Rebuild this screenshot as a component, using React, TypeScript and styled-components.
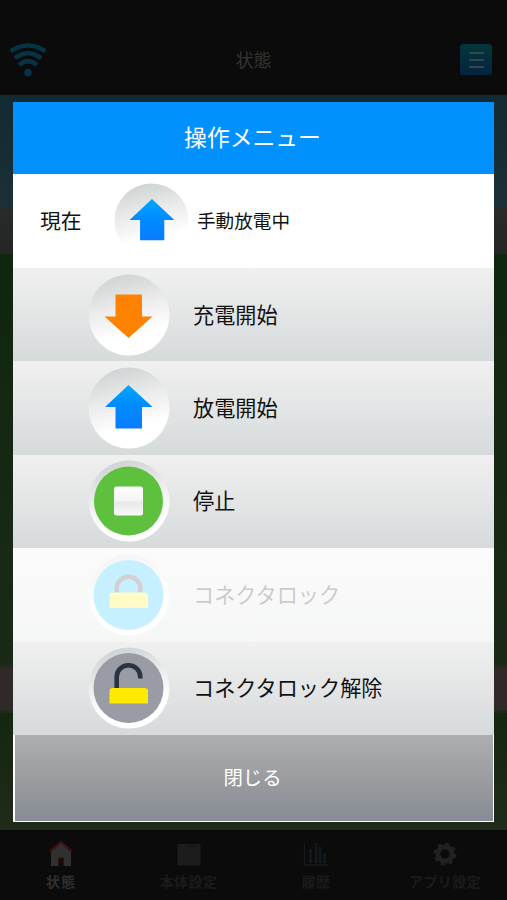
import React from 'react';
import styled, { createGlobalStyle } from 'styled-components';

const GlobalStyle = createGlobalStyle`
  * { box-sizing: border-box; }
  body {
    margin: 0;
    background: #0b0b0b;
    font-family: "Noto Sans CJK JP", "Noto Sans", sans-serif;
  }
`;

const Screen = styled.div`
  position: relative;
  display: flex;
  flex-direction: column;
  width: 507px;
  height: 900px;
  overflow: hidden;
  background: #0b0b0b;
`;

const TopBar = styled.header`
  display: flex;
  flex: none;
  align-items: center;
  justify-content: space-between;
  height: 95px;
  padding: 24px 15px 0 9px;
`;

const ScreenTitle = styled.h1`
  margin: 0 0 2px;
  color: #333;
  font-size: 18px;
  font-weight: 400;
  line-height: 24px;
`;

const MenuButton = styled.button`
  display: flex;
  flex-direction: column;
  align-items: center;
  justify-content: center;
  gap: 5px;
  width: 32px;
  height: 31px;
  padding: 0;
  border: 0;
  border-radius: 3px;
  background: linear-gradient(#03373c, #04233f);
`;

const MenuLine = styled.span`
  width: 15px;
  height: 2px;
  background: #38444a;
`;

const Scene = styled.div`
  display: flex;
  flex: 1;
  flex-direction: column;
`;

const Sky = styled.div`
  flex: none;
  height: 112px;
  background: linear-gradient(#122a32, #1b3038);
`;

const Cloud = styled.div`
  flex: none;
  height: 47px;
  background: linear-gradient(#292b2b, #242625);
`;

const Grass = styled.div`
  flex: 1;
  background: linear-gradient(#10260e, #1b2a18);
`;

const Path = styled.div`
  flex: none;
  height: 48px;
  border-top: 3px solid #242a20;
  border-bottom: 3px solid #202b1c;
  background: #302927;
`;

const Lawn = styled.div`
  flex: none;
  height: 117px;
  background: linear-gradient(#142610, #202b1a);
`;

const TabBar = styled.nav`
  display: grid;
  flex: none;
  grid-template-columns: 122px 133px 122px 136px;
  height: 70px;
`;

const Tab = styled.div<{ $active?: boolean }>`
  display: flex;
  flex-direction: column;
  align-items: center;
  padding-top: 11px;
  color: ${({ $active }) => ($active ? '#303030' : '#1b1b1b')};
  font-size: 14px;
  font-weight: 700;
  line-height: 20px;
  letter-spacing: ${({ $active }) => ($active ? '1px' : '0.4px')};
  white-space: nowrap;

  svg { display: block; margin-bottom: 4px; }
`;

const Dialog = styled.section`
  position: absolute;
  top: 102px;
  left: 13px;
  display: flex;
  flex-direction: column;
  width: 481px;
  height: 720px;
  background: #fff;
`;

const DialogTitle = styled.h2`
  flex: none;
  height: 72px;
  margin: 0;
  padding-right: 2px;
  background: #0091ff;
  color: #fff;
  font-size: 22.8px;
  font-weight: 400;
  line-height: 70px;
  text-align: center;
`;

const CurrentRow = styled.div`
  display: flex;
  flex: none;
  align-items: flex-start;
  height: 94px;
  padding: 9px 0 0 27px;
  color: #111;
`;

const CurrentLabel = styled.span`
  width: 74px;
  font-size: 20.8px;
  line-height: 75px;
`;

const CurrentValue = styled.span`
  margin-left: 8px;
  font-size: 18.6px;
  line-height: 74px;
`;

const ActionList = styled.div`
  display: grid;
  flex: none;
  grid-template-rows: repeat(5, 93.4px);
`;

const Action = styled.button<{ $disabled?: boolean }>`
  display: flex;
  align-items: center;
  gap: 23px;
  padding: 0 0 0 75px;
  border: 0;
  background: linear-gradient(#f0f0f0, #d6dadb);
  color: #111;
  font-family: inherit;
  font-size: 21.15px;
  line-height: 30px;
  text-align: left;
  opacity: ${({ $disabled }) => ($disabled ? 0.22 : 1)};

  svg { flex: none; }
`;

const ActionLabel = styled.span`
  padding-bottom: 2px;
`;

const CloseButton = styled.button`
  flex: 1;
  margin: 0 1.5px 1.5px;
  padding: 0 2px 2px 0;
  border: 0;
  background: linear-gradient(#adafaf, #989a9e 55%, #878b95);
  color: #fff;
  font-family: inherit;
  font-size: 19.4px;
  line-height: 82px;
`;

const WifiIcon = () => (
  <svg width="38" height="34" viewBox="0 0 38 34" fill="none" stroke="#063444" strokeWidth="4.4">
    <path d="M1.6 8.2Q19-3.2 36.4 8.2" />
    <path d="M5.8 15.2Q19 5.2 32.2 15.2" />
    <path d="M10 22.2Q19 14 28 22.2" />
    <circle cx="19" cy="29.5" r="3.8" fill="#063444" stroke="none" />
  </svg>
);

const Dial = ({ id }: { id: string }) => (
  <>
    <defs>
      <linearGradient id={`${id}-dial`} x1="0.35" y1="0" x2="0.6" y2="1">
        <stop offset="0" stopColor="#cfd3d3" />
        <stop offset="0.42" stopColor="#ededed" />
        <stop offset="0.75" stopColor="#fff" />
      </linearGradient>
      <linearGradient id={`${id}-blue`} x1="0" y1="0" x2="0" y2="1">
        <stop offset="0" stopColor="#00a8ff" />
        <stop offset="0.45" stopColor="#008cff" />
        <stop offset="1" stopColor="#087cff" />
      </linearGradient>
    </defs>
    <circle cx="41" cy="41" r="40.5" fill={`url(#${id}-dial)`} />
  </>
);

const CurrentIcon = () => (
  <svg width="75" height="64" viewBox="0 0 82 70">
    <Dial id="now" />
    <path d="M41.5 17.5L66 40.5H55V62.5H28.5V40.5H17Z" fill="url(#now-blue)" />
  </svg>
);

const ChargeIcon = () => (
  <svg width="82" height="82" viewBox="0 0 82 82">
    <Dial id="charge" />
    <path d="M27.5 20.5H54V42.5H64.5L40.5 64L16.5 42.5H27.5Z" fill="#ff8200" />
  </svg>
);

const DischargeIcon = () => (
  <svg width="82" height="82" viewBox="0 0 82 82">
    <Dial id="discharge" />
    <path d="M40.5 18L64.5 40H54V61.5H27.5V40H17Z" fill="url(#discharge-blue)" />
  </svg>
);

const StopIcon = () => (
  <svg width="82" height="82" viewBox="0 0 82 82">
    <Dial id="stop" />
    <defs>
      <linearGradient id="stop-square" x1="0" y1="0" x2="0" y2="1">
        <stop offset="0" stopColor="#fff" />
        <stop offset="0.5" stopColor="#f3f4f4" />
        <stop offset="0.55" stopColor="#e8e8ea" />
        <stop offset="1" stopColor="#fafafa" />
      </linearGradient>
    </defs>
    <circle cx="40.5" cy="41" r="34.5" fill="#5dc13d" />
    <rect x="26" y="26.5" width="29" height="29" rx="2.5" fill="url(#stop-square)" />
  </svg>
);

const LockIcon = () => (
  <svg width="82" height="82" viewBox="0 0 82 82">
    <Dial id="lock" />
    <circle cx="40.5" cy="41" r="35" fill="#00bfff" />
    <path d="M28.7 38.5V34.5A11.8 11.8 0 0 1 52.3 34.5V38.5" fill="none" stroke="#372e35" strokeWidth="4.5" />
    <path d="M21.5 54V41Q21.5 38.5 25 38.5H56Q60 38.5 60 41V54Z" fill="#ffed00" />
  </svg>
);

const UnlockIcon = () => (
  <svg width="82" height="82" viewBox="0 0 82 82">
    <Dial id="unlock" />
    <circle cx="40.5" cy="41" r="35" fill="#999ca4" />
    <path d="M28.7 41V30A11.8 11.8 0 0 1 52.3 30V31.5" fill="none" stroke="#293342" strokeWidth="4.6" />
    <path d="M21.5 56.5V43.5Q21.5 41 25 41H56Q60 41 60 43.5V56.5Z" fill="#ffe900" />
  </svg>
);

const HomeIcon = () => (
  <svg width="24" height="26" viewBox="0 0 24 26">
    <path d="M2 11L12 2L22 11V25H2Z" fill="#303030" />
    <path d="M1 10L12 1L23 10" fill="none" stroke="#441014" strokeWidth="2" />
    <path d="M9.5 25V17H14.5V25" fill="#160b0b" stroke="#351012" />
  </svg>
);

const DeviceIcon = () => (
  <svg width="24" height="26" viewBox="0 0 24 26">
    <rect x="0.5" y="3" width="23" height="21.5" rx="1" fill="#1c1c1c" />
    <path d="M10 5H21" stroke="#111" />
  </svg>
);

const HistoryIcon = () => (
  <svg width="26" height="26" viewBox="0 0 26 26" fill="none">
    <path d="M1.5 2V24H25" stroke="#171a1c" strokeWidth="1.4" />
    <path d="M7.5 8V22M13 2V22M17 6V22M21.5 12V22" stroke="#131a1e" strokeWidth="2.6" />
  </svg>
);

const GearIcon = () => (
  <svg width="24" height="26" viewBox="0 0 24 26" fill="none" stroke="#212121">
    <circle cx="12" cy="13" r="7.2" strokeWidth="5" />
    <circle cx="12" cy="13" r="10" strokeWidth="3" strokeDasharray="4 3.854" />
  </svg>
);

const actions = [
  { label: '充電開始', Icon: ChargeIcon },
  { label: '放電開始', Icon: DischargeIcon },
  { label: '停止', Icon: StopIcon },
  { label: 'コネクタロック', Icon: LockIcon, disabled: true },
  { label: 'コネクタロック解除', Icon: UnlockIcon },
];

export default function App() {
  return (
    <>
      <GlobalStyle />
      <Screen>
        <TopBar>
          <WifiIcon />
          <ScreenTitle>状態</ScreenTitle>
          <MenuButton aria-label="メニュー">
            <MenuLine />
            <MenuLine />
            <MenuLine />
          </MenuButton>
        </TopBar>
        <Scene>
          <Sky />
          <Cloud />
          <Grass />
          <Path />
          <Lawn />
        </Scene>
        <TabBar>
          <Tab $active><HomeIcon />状態</Tab>
          <Tab><DeviceIcon />本体設定</Tab>
          <Tab><HistoryIcon />履歴</Tab>
          <Tab><GearIcon />アプリ設定</Tab>
        </TabBar>
        <Dialog role="dialog">
          <DialogTitle>操作メニュー</DialogTitle>
          <CurrentRow>
            <CurrentLabel>現在</CurrentLabel>
            <CurrentIcon />
            <CurrentValue>手動放電中</CurrentValue>
          </CurrentRow>
          <ActionList>
            {actions.map(({ label, Icon, disabled }) => (
              <Action key={label} $disabled={disabled} disabled={disabled}>
                <Icon />
                <ActionLabel>{label}</ActionLabel>
              </Action>
            ))}
          </ActionList>
          <CloseButton>閉じる</CloseButton>
        </Dialog>
      </Screen>
    </>
  );
}
